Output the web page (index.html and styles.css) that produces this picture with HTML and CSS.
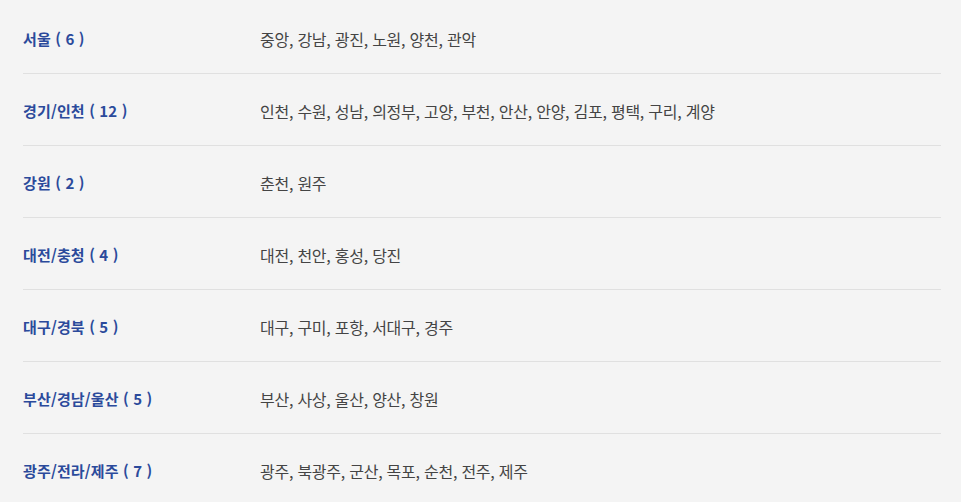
FILE: index.html
```html
<!DOCTYPE html>
<html lang="ko">
<head>
<meta charset="utf-8">
<link rel="stylesheet" href="styles.css">
</head>
<body>
<div class="list">
  <div class="row"><div class="region">서울 ( 6 )</div><div class="cities">중앙, 강남, 광진, 노원, 양천, 관악</div></div>
  <div class="row"><div class="region">경기/인천 ( 12 )</div><div class="cities">인천, 수원, 성남, 의정부, 고양, 부천, 안산, 안양, 김포, 평택, 구리, 계양</div></div>
  <div class="row"><div class="region">강원 ( 2 )</div><div class="cities">춘천, 원주</div></div>
  <div class="row"><div class="region">대전/충청 ( 4 )</div><div class="cities">대전, 천안, 홍성, 당진</div></div>
  <div class="row"><div class="region">대구/경북 ( 5 )</div><div class="cities">대구, 구미, 포항, 서대구, 경주</div></div>
  <div class="row"><div class="region">부산/경남/울산 ( 5 )</div><div class="cities">부산, 사상, 울산, 양산, 창원</div></div>
  <div class="row"><div class="region">광주/전라/제주 ( 7 )</div><div class="cities">광주, 북광주, 군산, 목포, 순천, 전주, 제주</div></div>
</div>
</body>
</html>
```
FILE: styles.css
```css
html, body {
  margin: 0;
  padding: 0;
  background: #f4f4f4;
}
body {
  font-family: "Noto Sans CJK KR", "Noto Sans", sans-serif;
  font-size: 15px;
}
.list {
  margin: 0 20px 0 23px;
  padding-top: 2px;
}
.row {
  display: grid;
  grid-template-columns: 237px 1fr;
  align-items: center;
  height: 69px;
  padding-top: 2px;
  border-bottom: 1px solid #e0e0e0;
}
.row:last-child {
  border-bottom: none;
}
.region {
  color: #2b4a9b;
  font-weight: 700;
  letter-spacing: 0.15px;
}
.cities {
  color: #444;
  font-size: 16px;
  letter-spacing: -0.25px;
}
```
